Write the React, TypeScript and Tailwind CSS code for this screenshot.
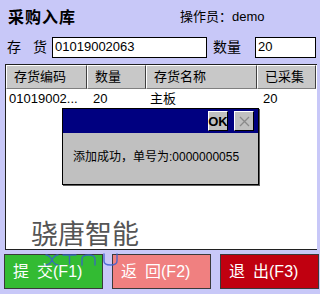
import React from "react";

const font = { fontFamily: '"Liberation Sans", "Noto Sans CJK SC", sans-serif' };

const columns = [
  { label: "存货编码", w: "w-[81px]" },
  { label: "数量", w: "w-[59px]" },
  { label: "存货名称", w: "w-[111px]" },
  { label: "已采集", w: "w-[59px]" },
];

const rows = [{ code: "01019002...", qty: "20", name: "主板", got: "20" }];

function HeaderCell({ label, w }: { label: string; w: string }) {
  return (
    <div
      className={`${w} h-full shrink-0 bg-[#c8c8c8] border-t border-l border-t-white border-l-white border-r border-b border-r-[#404040] border-b-[#808080] flex items-center pl-[7px] text-[13px] text-black`}
    >
      {label}
    </div>
  );
}

function ResultDialog() {
  return (
    <div className="absolute left-[62px] top-[108px] w-[197px] h-[77px] border border-black bg-[#c0c0c0] shadow-[1px_1px_0_#606060] flex flex-col">
      <div className="h-[24px] bg-[#000080] flex items-center justify-end gap-[6px] pr-[4px]">
        <div className="w-[20px] h-[20px] bg-[#c0c0c0] border border-t-white border-l-white border-r-black border-b-black flex items-center justify-center text-[13px] font-bold text-black leading-none">
          OK
        </div>
        <div className="w-[20px] h-[20px] bg-[#c0c0c0] border border-t-white border-l-white border-r-black border-b-black flex items-center justify-center">
          <svg width="11" height="11" viewBox="0 0 11 11">
            <path d="M1 1L10 10M10 1L1 10" stroke="#8a8a8a" strokeWidth="1.3" />
          </svg>
        </div>
      </div>
      <div className="flex-1 flex items-center pl-[10px] pb-[3px] text-[12px] text-black">
        添加成功，单号为:0000000055
      </div>
    </div>
  );
}

function ActionButton({ label, fkey, bg }: { label: string; fkey: string; bg: string }) {
  return (
    <div className={`w-[99px] h-[35px] ${bg} border border-[#3a3a3a] flex items-center pl-[8px] text-[16px] text-white`}>
      <span className="tracking-[8px]">{label[0]}</span>
      <span>{label[1]}</span>
      <span>({fkey})</span>
    </div>
  );
}

function WatermarkLogo() {
  return (
    <svg className="absolute left-[44px] top-[252px]" width="80" height="16" viewBox="0 0 80 16" fill="none">
      <g stroke="#3a5fd0" strokeWidth="1.4" strokeLinecap="round" opacity="0.85">
        <path d="M2 3C5 3 7 6 8 8C9 6 11 3 14 3" />
        <path d="M2 13C5 13 7 10 8 8C9 10 11 13 14 13" />
        <path d="M19 3H32M25.5 3V12" />
        <path d="M38 13V7C38 4 40 3 44.5 3C49 3 51 4 51 7V13" />
        <path d="M60 2V9C60 12 62 13 66.5 13C71 13 73 12 73 9V2" />
      </g>
    </svg>
  );
}

export default function App() {
  return (
    <div className="relative w-[320px] h-[294px] bg-[#c8c8f8] overflow-hidden flex flex-col" style={font}>
      <div className="h-[36px] flex items-start pt-[8px] pl-[8px]">
        <div className="text-[16px] font-bold text-black leading-[20px] tracking-[1px]">采购入库</div>
        <div className="ml-[104px] mt-[1px] text-[13px] text-black leading-[16px]">操作员：demo</div>
      </div>

      <div className="h-[22px] flex items-center">
        <div className="w-[52px] pl-[7px] text-[14px] text-black tracking-[4px]">存 货</div>
        <div className="w-[155px] h-[21px] bg-white border border-black flex items-center pl-[2px] text-[13px] text-black">
          01019002063
        </div>
        <div className="w-[48px] pl-[6px] text-[14px] text-black">数量</div>
        <div className="w-[61px] h-[21px] bg-white border border-black flex items-center pl-[2px] text-[13px] text-black">
          20
        </div>
      </div>

      <div className="mt-[6px] ml-[5px] w-[312px] h-[186px] bg-white border-t border-l border-b border-[#202020] flex flex-col">
        <div className="h-[24px] flex">
          {columns.map((c) => (
            <HeaderCell key={c.label} label={c.label} w={c.w} />
          ))}
          <div className="flex-1 bg-[#c8c8c8] border-l border-l-white" />
        </div>
        {rows.map((r) => (
          <div key={r.code} className="h-[20px] flex items-center text-[13px] text-black">
            <div className="w-[81px] pl-[3px]">{r.code}</div>
            <div className="w-[59px] pl-[6px]">{r.qty}</div>
            <div className="w-[111px] pl-[4px]">{r.name}</div>
            <div className="w-[59px] pl-[6px]">{r.got}</div>
          </div>
        ))}
        <div className="flex-1 flex items-end pl-[25px]">
          <div className="text-[27px] text-[#555555] leading-[28px]">骁唐智能</div>
        </div>
      </div>

      <div className="mt-[4px] flex gap-[9px] pl-[4px]">
        <ActionButton label="提交" fkey="F1" bg="bg-[#33bb33]" />
        <ActionButton label="返回" fkey="F2" bg="bg-[#f08080]" />
        <ActionButton label="退出" fkey="F3" bg="bg-[#c00010]" />
      </div>

      <WatermarkLogo />
      <ResultDialog />
    </div>
  );
}
